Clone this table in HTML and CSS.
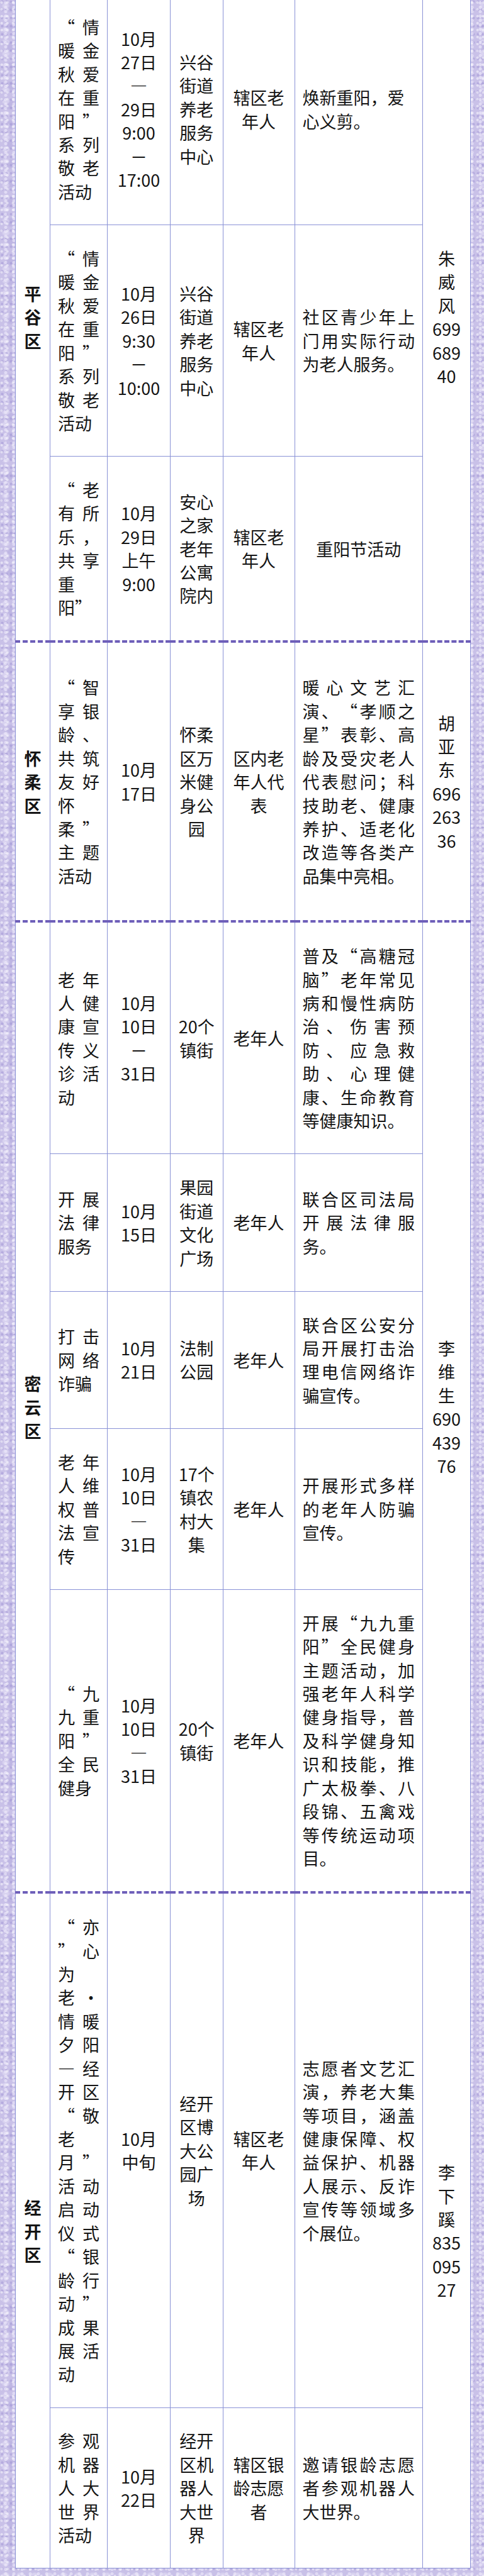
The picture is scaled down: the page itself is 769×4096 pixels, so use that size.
FILE: index.html
```html
<!DOCTYPE html>
<html lang="zh-CN">
<head>
<meta charset="utf-8">
<title>重阳节敬老活动安排</title>
<link rel="stylesheet" href="styles.css">
</head>
<body>
<div class="page">
<table class="events">
<colgroup>
<col class="c-dist"><col class="c-name"><col class="c-date"><col class="c-place"><col class="c-who"><col class="c-what"><col class="c-contact">
</colgroup>
<tbody>
<tr>
<td class="dist" rowspan="3">平<br>谷<br>区</td>
<td class="name"><span>“情</span><span>暖金</span><span>秋爱</span><span>在重</span><span>阳”</span><span>系列</span><span>敬老</span><span>活动</span></td>
<td class="ctr">10月<br>27日<br>—<br>29日<br>9:00<br>－<br>17:00</td>
<td class="ctr">兴谷<br>街道<br>养老<br>服务<br>中心</td>
<td class="ctr">辖区老<br>年人</td>
<td class="what left">焕新重阳，爱心义剪。</td>
<td class="contact" rowspan="3">朱<br>威<br>风<br>699<br>689<br>40</td>
</tr>
<tr>
<td class="name"><span>“情</span><span>暖金</span><span>秋爱</span><span>在重</span><span>阳”</span><span>系列</span><span>敬老</span><span>活动</span></td>
<td class="ctr">10月<br>26日<br>9:30<br>－<br>10:00</td>
<td class="ctr">兴谷<br>街道<br>养老<br>服务<br>中心</td>
<td class="ctr">辖区老<br>年人</td>
<td class="what">社区青少年上门用实际行动为老人服务。</td>
</tr>
<tr>
<td class="name"><span>“老</span><span>有所</span><span>乐，</span><span>共享</span><span>重</span><span>阳”</span></td>
<td class="ctr">10月<br>29日<br>上午<br>9:00</td>
<td class="ctr">安心<br>之家<br>老年<br>公寓<br>院内</td>
<td class="ctr">辖区老<br>年人</td>
<td class="what mid">重阳节活动</td>
</tr>

<tr class="sec tall">
<td class="dist">怀<br>柔<br>区</td>
<td class="name"><span>“智</span><span>享银</span><span>龄、</span><span>共筑</span><span>友好</span><span>怀</span><span>柔”</span><span>主题</span><span>活动</span></td>
<td class="ctr">10月<br>17日</td>
<td class="ctr">怀柔<br>区万<br>米健<br>身公<br>园</td>
<td class="ctr">区内老<br>年人代<br>表</td>
<td class="what">暖心文艺汇演、“孝顺之星”表彰、高龄及受灾老人代表慰问；科技助老、健康养护、适老化改造等各类产品集中亮相。</td>
<td class="contact">胡<br>亚<br>东<br>696<br>263<br>36</td>
</tr>

<tr class="sec">
<td class="dist" rowspan="5">密<br>云<br>区</td>
<td class="name"><span>老年</span><span>人健</span><span>康宣</span><span>传义</span><span>诊活</span><span>动</span></td>
<td class="ctr">10月<br>10日<br>－<br>31日</td>
<td class="ctr">20个<br>镇街</td>
<td class="ctr">老年人</td>
<td class="what">普及“高糖冠脑”老年常见病和慢性病防治、伤害预防、应急救助、心理健康、生命教育等健康知识。</td>
<td class="contact" rowspan="5">李<br>维<br>生<br>690<br>439<br>76</td>
</tr>
<tr>
<td class="name"><span>开展</span><span>法律</span><span>服务</span></td>
<td class="ctr">10月<br>15日</td>
<td class="ctr">果园<br>街道<br>文化<br>广场</td>
<td class="ctr">老年人</td>
<td class="what">联合区司法局开展法律服务。</td>
</tr>
<tr>
<td class="name"><span>打击</span><span>网络</span><span>诈骗</span></td>
<td class="ctr">10月<br>21日</td>
<td class="ctr">法制<br>公园</td>
<td class="ctr">老年人</td>
<td class="what">联合区公安分局开展打击治理电信网络诈骗宣传。</td>
</tr>
<tr>
<td class="name"><span>老年</span><span>人维</span><span>权普</span><span>法宣</span><span>传</span></td>
<td class="ctr">10月<br>10日<br>—<br>31日</td>
<td class="ctr">17个<br>镇农<br>村大<br>集</td>
<td class="ctr">老年人</td>
<td class="what">开展形式多样的老年人防骗宣传。</td>
</tr>
<tr>
<td class="name"><span>“九</span><span>九重</span><span>阳”</span><span>全民</span><span>健身</span></td>
<td class="ctr">10月<br>10日<br>—<br>31日</td>
<td class="ctr">20个<br>镇街</td>
<td class="ctr">老年人</td>
<td class="what">开展“九九重阳”全民健身主题活动，加强老年人科学健身指导，普及科学健身知识和技能，推广太极拳、八段锦、五禽戏等传统运动项目。</td>
</tr>

<tr class="sec">
<td class="dist" rowspan="2">经<br>开<br>区</td>
<td class="name"><span>“亦</span><span>”心</span><span>为</span><span>老·</span><span>情暖</span><span>夕阳</span><span>—经</span><span>开区</span><span>“敬</span><span>老</span><span>月”</span><span>活动</span><span>启动</span><span>仪式</span><span>“银</span><span>龄行</span><span>动”</span><span>成果</span><span>展活</span><span>动</span></td>
<td class="ctr">10月<br>中旬</td>
<td class="ctr">经开<br>区博<br>大公<br>园广<br>场</td>
<td class="ctr">辖区老<br>年人</td>
<td class="what">志愿者文艺汇演，养老大集等项目，涵盖健康保障、权益保护、机器人展示、反诈宣传等领域多个展位。</td>
<td class="contact" rowspan="2">李<br>下<br>蹊<br>835<br>095<br>27</td>
</tr>
<tr>
<td class="name"><span>参观</span><span>机器</span><span>人大</span><span>世界</span><span>活动</span></td>
<td class="ctr">10月<br>22日</td>
<td class="ctr">经开<br>区机<br>器人<br>大世<br>界</td>
<td class="ctr">辖区银<br>龄志愿<br>者</td>
<td class="what">邀请银龄志愿者参观机器人大世界。</td>
</tr>
</tbody>
</table>
</div>
</body>
</html>
```

FILE: styles.css
```css
html, body {
  margin: 0;
  padding: 0;
}

body {
  background-color: #c9c1e8;
  background-image:
    radial-gradient(circle at 30% 35%, rgba(255, 255, 255, 0.5) 0 1.5px, transparent 2.5px),
    radial-gradient(circle at 70% 65%, rgba(240, 236, 252, 0.6) 0 2px, transparent 3px),
    radial-gradient(circle at 50% 20%, rgba(150, 138, 208, 0.4) 0 1.5px, transparent 2.5px),
    radial-gradient(ellipse at 40% 50%, rgba(236, 232, 250, 0.45) 0 4px, transparent 7px),
    radial-gradient(ellipse at 60% 40%, rgba(170, 160, 218, 0.35) 0 5px, transparent 8px);
  background-size: 9px 11px, 13px 7px, 7px 13px, 23px 19px, 29px 31px;
  font-family: "Noto Sans CJK SC", "Noto Sans", sans-serif;
  color: #141414;
}

.page {
  margin: 0 22px 0 24px;
  background: #ffffff;
}

.events {
  width: 100%;
  margin-top: -11px;
  border-collapse: collapse;
  table-layout: fixed;
  font-size: 27px;
  line-height: 37.44px;
}

.c-dist { width: 55px; }
.c-name { width: 91px; }
.c-date { width: 100px; }
.c-place { width: 83.5px; }
.c-who { width: 114px; }
.c-what { width: 203.5px; }
.c-contact { width: 76px; }

.events td {
  border: 1.5px solid #8a92d6;
  padding: 33.8px 12px;
  vertical-align: middle;
  text-align: justify;
  text-spacing-trim: space-all;
}

.events tr.sec > td {
  border-top: 4px dashed #6e5fb9;
}

.events tr.tall > td {
  padding-top: 52px;
  padding-bottom: 52px;
}

.events td.dist {
  font-weight: 700;
  text-align: center;
  padding-left: 4px;
  padding-right: 4px;
}

.events td.ctr,
.events td.contact {
  text-align: center;
  white-space: nowrap;
}

.name > span {
  display: block;
  text-align: justify;
  text-align-last: justify;
}

.name > span:last-child {
  text-align-last: left;
}

.events td.what.left {
  text-align: left;
}

.events td.what.mid {
  text-align: center;
}
```
